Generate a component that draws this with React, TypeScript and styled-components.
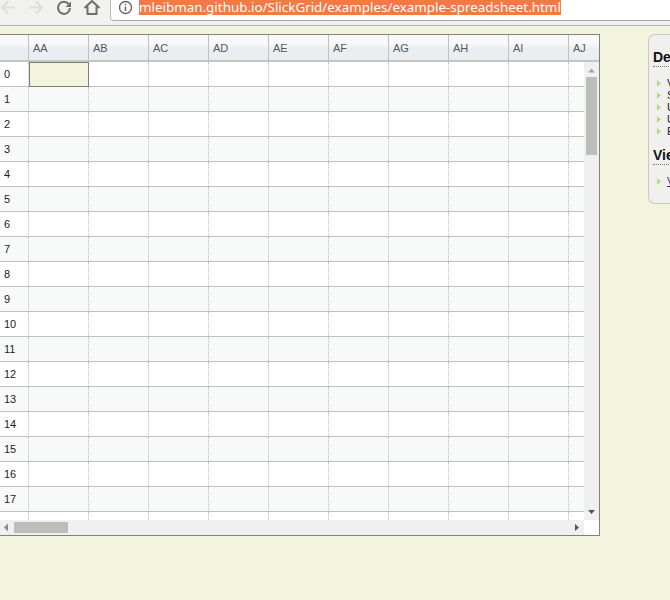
import React from "react";
import styled, { createGlobalStyle } from "styled-components";

const GlobalStyle = createGlobalStyle`
  html, body {
    margin: 0;
    padding: 0;
    width: 670px;
    height: 600px;
    overflow: hidden;
    background: #f3f4de;
    font-family: "Liberation Sans", Arial, sans-serif;
  }
`;

const Toolbar = styled.div`
  display: flex;
  align-items: flex-start;
  height: 26px;
  box-sizing: border-box;
  background: #f1f2f0;
  border-bottom: 1px solid #b4b4ae;
`;

const IconRow = styled.div`
  display: flex;
  gap: 12px;
  width: 110px;
  flex: none;
`;

const NavIcon = styled.svg<{ $dim?: boolean }>`
  flex: none;
  width: 16px;
  height: 16px;
  fill: none;
  stroke: ${(p) => (p.$dim ? "#dededc" : "#6e6e6e")};
  stroke-width: 2;
`;

const UrlBox = styled.div`
  flex: 1;
  display: flex;
  align-items: flex-start;
  gap: 6px;
  height: 21px;
  box-sizing: border-box;
  padding-left: 7px;
  background: #fff;
  border-left: 1px solid #b8b8b8;
  border-bottom: 1px solid #a9a9a9;
  border-bottom-left-radius: 4px;
  font-family: "Noto Sans", sans-serif;
  font-size: 13.4px;
`;

const Selected = styled.span`
  background: #f47a45;
  color: #fff;
  line-height: 15px;
  white-space: nowrap;
`;

const Content = styled.div`
  display: flex;
  align-items: flex-start;
  padding-top: 8px;
`;

const Grid = styled.div`
  flex: none;
  display: grid;
  grid-template-columns: 584px 15px;
  grid-template-rows: 27px 458px 15px;
  width: 600px;
  height: 502px;
  box-sizing: border-box;
  border: 1px solid #808080;
  border-left: none;
  background: #fff;
`;

const HeaderRow = styled.div`
  grid-column: 1 / 3;
  display: flex;
  overflow: hidden;
  box-sizing: border-box;
  border-bottom: 2px solid #c3c5c3;
  background: linear-gradient(#f8f9f8 0, #f7f9f8 35%, #e9eef1 55%, #e9eef1 100%);
`;

const HeaderCell = styled.div<{ $narrow?: boolean }>`
  flex: none;
  box-sizing: border-box;
  width: ${(p) => (p.$narrow ? "29px" : "60px")};
  padding: 7px 0 0 4px;
  border-right: 1px solid #c0c0c0;
  font-size: 11px;
  line-height: 13px;
  color: #55585c;
`;

const Viewport = styled.div`
  overflow: hidden;
`;

const Row = styled.div<{ $odd: boolean }>`
  display: flex;
  height: 25px;
  box-sizing: border-box;
  border-bottom: 1px solid #c0c1bd;
  background: ${(p) => (p.$odd ? "#f8faf9" : "#fff")};
`;

const RowNumber = styled.div`
  flex: none;
  width: 29px;
  box-sizing: border-box;
  padding: 5px 0 0 4px;
  border-right: 1px dotted #c0c0c0;
  font-size: 11px;
  line-height: 14px;
  color: #222;
`;

const Cell = styled.div<{ $active?: boolean }>`
  flex: none;
  width: 60px;
  box-sizing: border-box;
  border-right: 1px dotted #c0c0c0;
  ${(p) =>
    p.$active &&
    `
    background: #f2f4de;
    border: 1px solid #7e7e76;
    height: 25px;
  `}
`;

const VTrack = styled.div`
  background: #eff0ef;
  display: flex;
  flex-direction: column;
  align-items: center;
`;

const VThumb = styled.div`
  width: 11px;
  height: 78px;
  margin-top: 2px;
  background: #bcbeb9;
`;

const Arrow = styled.svg`
  width: 9px;
  height: 9px;
  fill: #555;
  flex: none;
`;

const UpArrow = styled(Arrow)`
  fill: #a5a5a3;
  margin-top: 4px;
`;

const DownArrow = styled(Arrow)`
  margin-top: auto;
  margin-bottom: 4px;
`;

const HTrack = styled.div`
  display: flex;
  align-items: center;
  background: #eff0ef;
`;

const LeftArrow = styled(Arrow)`
  fill: #8a8a88;
  margin-left: 2px;
`;

const HThumb = styled.div`
  width: 54px;
  height: 11px;
  margin-left: 3px;
  background: #bcbeb9;
`;

const RightArrow = styled(Arrow)`
  margin-left: auto;
  margin-right: 3px;
`;

const Corner = styled.div`
  background: #fff;
`;

const Sidebar = styled.div`
  flex: none;
  width: 60px;
  height: 170px;
  margin-left: 48px;
  box-sizing: border-box;
  padding: 15px 0 0 4px;
  background: #f0f1ef;
  border: 1px solid #c8c8c8;
  border-right: none;
  border-radius: 7px 0 0 7px;
  overflow: hidden;
  white-space: nowrap;
`;

const SideTitle = styled.div`
  font-size: 14px;
  font-weight: bold;
  line-height: 15px;
  color: #111;
  border-bottom: 1px dotted #777;
  padding-bottom: 1px;
  width: 120px;
`;

const SideList = styled.ul`
  list-style: none;
  margin: 10px 0 11px;
  padding: 0;
`;

const SideItem = styled.li`
  display: flex;
  align-items: center;
  gap: 6px;
  padding-left: 4px;
  height: 12px;
  font-size: 11px;
  line-height: 12px;
  color: #222;
`;

const Bullet = styled.svg`
  flex: none;
  width: 4px;
  height: 7px;
  fill: #b5d98a;
`;

const SideLink = styled.a`
  color: #551a8b;
  text-decoration: underline;
`;

const columns = ["AA", "AB", "AC", "AD", "AE", "AF", "AG", "AH", "AI", "AJ"];
const rows = Array.from({ length: 19 }, (_, i) => i);
const features = ["Virtual scrolling", "Selection", "Undo", "Up", "Editing"];

function Triangle({ as: Comp, points }: { as: typeof Arrow; points: string }) {
  return (
    <Comp viewBox="0 0 9 9">
      <polygon points={points} />
    </Comp>
  );
}

export default function App() {
  return (
    <>
      <GlobalStyle />
      <Toolbar>
        <IconRow>
          <NavIcon $dim viewBox="0 0 16 16">
            <path d="M15 7.5H2M8 1.5l-6 6 6 6" />
          </NavIcon>
          <NavIcon $dim viewBox="0 0 16 16">
            <path d="M1 7.5h13M8 1.5l6 6-6 6" />
          </NavIcon>
          <NavIcon viewBox="0 0 16 16">
            <path d="M12.6 4A6 6 0 1 0 14 8" />
            <polygon points="15,1.5 15,7 9.5,7" fill="#6e6e6e" stroke="none" />
          </NavIcon>
          <NavIcon viewBox="0 0 16 16">
            <path d="M0.5 8L8 1l7.5 7M3.5 6.5V14h9V6.5" />
          </NavIcon>
        </IconRow>
        <UrlBox>
          <svg width="15" height="15" viewBox="0 0 15 15" fill="none" stroke="#666">
            <circle cx="7.5" cy="7.5" r="6" strokeWidth="1.4" />
            <path d="M7.5 6.5v4.5M7.5 3.8v1.4" strokeWidth="1.5" />
          </svg>
          <Selected>mleibman.github.io/SlickGrid/examples/example-spreadsheet.html</Selected>
        </UrlBox>
      </Toolbar>
      <Content>
        <Grid>
          <HeaderRow>
            <HeaderCell $narrow />
            {columns.map((c) => (
              <HeaderCell key={c}>{c}</HeaderCell>
            ))}
          </HeaderRow>
          <Viewport>
            {rows.map((r) => (
              <Row key={r} $odd={r % 2 === 1}>
                {/* the last row is only partly in view, its number is not drawn */}
                <RowNumber>{r < 18 ? r : ""}</RowNumber>
                {columns.map((c, i) => (
                  <Cell key={c} $active={r === 0 && i === 0} />
                ))}
              </Row>
            ))}
          </Viewport>
          <VTrack>
            <Triangle as={UpArrow} points="4.5,2.5 8,6.5 1,6.5" />
            <VThumb />
            <Triangle as={DownArrow} points="1,3 8,3 4.5,7" />
          </VTrack>
          <HTrack>
            <Triangle as={LeftArrow} points="2,4.5 6,0.5 6,8.5" />
            <HThumb />
            <Triangle as={RightArrow} points="3,1 7,4.5 3,8" />
          </HTrack>
          <Corner />
        </Grid>
        <Sidebar>
          <SideTitle>Demonstrates:</SideTitle>
          <SideList>
            {features.map((f) => (
              <SideItem key={f}>
                <Bullet viewBox="0 0 4 7">
                  <polygon points="0,0 4,3.5 0,7" />
                </Bullet>
                {f}
              </SideItem>
            ))}
          </SideList>
          <SideTitle>View Source:</SideTitle>
          <SideList>
            <SideItem>
              <Bullet viewBox="0 0 4 7">
                <polygon points="0,0 4,3.5 0,7" />
              </Bullet>
              <SideLink href="#">View the source for this example on Github</SideLink>
            </SideItem>
          </SideList>
        </Sidebar>
      </Content>
    </>
  );
}
